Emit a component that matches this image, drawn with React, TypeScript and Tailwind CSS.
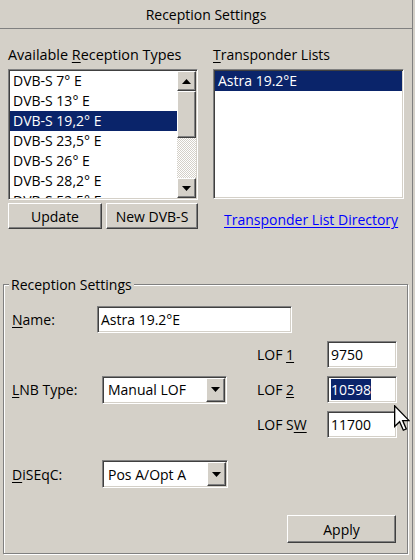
import React from "react";

const raised =
  "border border-t-white border-l-white border-r-[#404040] border-b-[#404040] shadow-[inset_-1px_-1px_0_#808080]";
const sunken =
  "border border-t-[#808080] border-l-[#808080] border-r-white border-b-white shadow-[inset_1px_1px_0_#404040,inset_-1px_-1px_0_#d4d0c8]";

function Tri({ down = false }: { down?: boolean }) {
  return (
    <svg width="9" height="5" viewBox="0 0 9 5">
      {down ? <polygon points="0,0 9,0 4.5,5" fill="#000" /> : <polygon points="0,5 9,5 4.5,0" fill="#000" />}
    </svg>
  );
}

function Select({ value, w }: { value: string; w: string }) {
  return (
    <div className={`${sunken} ${w} h-[28px] bg-white flex items-stretch p-[1px]`}>
      <div className="flex-1 flex items-center pl-[4px] whitespace-nowrap">{value}</div>
      <div className={`${raised} w-[19px] bg-[#d4d0c8] flex items-center justify-center`}>
        <Tri down />
      </div>
    </div>
  );
}

function Field({ children, w }: { children: React.ReactNode; w: string }) {
  return (
    <div className={`${sunken} ${w} h-[27px] bg-white flex items-center pl-[3px] whitespace-nowrap`}>
      {children}
    </div>
  );
}

export default function App() {
  const items = [
    "DVB-S 7° E",
    "DVB-S 13° E",
    "DVB-S 19,2° E",
    "DVB-S 23,5° E",
    "DVB-S 26° E",
    "DVB-S 28,2° E",
    "DVB-S 52,5° E",
  ];
  return (
    <div className="w-[415px] h-[560px] bg-[#d4d0c8] text-black font-['Open_Sans',Arial,sans-serif] text-[14px] relative overflow-hidden">
      <div className="w-[413px] h-full border-r border-[#808080] flex flex-col">
        <div className="h-[29px] border-b border-[#808080] flex items-center justify-center">
          Reception Settings
        </div>
        <div className="flex items-start pl-[8px] pt-[16px]">
          <div className="w-[190px] flex flex-col">
            <div className="h-[20px] leading-[20px] whitespace-nowrap text-[14.4px]">
              Available <u className="underline-offset-2">R</u>eception Types
            </div>
            <div className={`${sunken} mt-[4px] h-[131px] bg-white flex p-[1px]`}>
              <div className="flex-1 overflow-hidden">
                {items.map((t, i) => (
                  <div
                    key={t}
                    className={`h-[20px] leading-[20px] pl-[3px] whitespace-nowrap ${
                      i === 2 ? "bg-[#0a246a] text-white" : ""
                    }`}
                  >
                    {t}
                  </div>
                ))}
              </div>
              <div className="w-[19px] flex flex-col">
                <div className={`${raised} h-[20px] bg-[#d4d0c8] flex items-center justify-center`}>
                  <Tri />
                </div>
                <div className={`${raised} h-[47px] bg-[#d4d0c8]`} />
                <div className="flex-1 bg-[repeating-conic-gradient(#d4d0c8_0%_25%,#ffffff_0%_50%)] bg-[length:2px_2px]" />
                <div className={`${raised} h-[20px] bg-[#d4d0c8] flex items-center justify-center`}>
                  <Tri down />
                </div>
              </div>
            </div>
            <div className="mt-[3px] flex gap-[4px]">
              <div className={`${raised} w-[94px] h-[26px] flex items-center justify-center`}>Update</div>
              <div className={`${raised} w-[92px] h-[26px] flex items-center justify-center`}>New DVB-S</div>
            </div>
          </div>
          <div className="ml-[15px] w-[191px] flex flex-col">
            <div className="h-[20px] leading-[20px] whitespace-nowrap">
              <u className="underline-offset-2">T</u>ransponder Lists
            </div>
            <div className={`${sunken} mt-[4px] h-[130px] bg-white p-[1px]`}>
              <div className="h-[20px] leading-[20px] pl-[3px] bg-[#0a246a] text-white">Astra 19.2°E</div>
            </div>
            <div className="mt-[11px] ml-[11px] h-[20px] leading-[20px] text-[#0000ff] underline underline-offset-2 whitespace-nowrap">
              Transponder List Directory
            </div>
          </div>
        </div>

        <div className="mt-[54px] ml-[3px] w-[405px] h-[270px] relative border border-[#808080] shadow-[inset_1px_1px_0_#ffffff,1px_1px_0_#ffffff] flex flex-col">
          <div className="absolute left-[5px] top-[-10px] px-[2px] bg-[#d4d0c8] leading-[20px] whitespace-nowrap">
            Reception Settings
          </div>
          <div className="mt-[21px] pl-[8px] h-[27px] flex items-center">
            <div className="w-[85px]">
              <u className="underline-offset-2">N</u>ame:
            </div>
            <Field w="w-[195px]">Astra 19.2°E</Field>
          </div>
          <div className="mt-[8px] h-[27px] flex items-center">
            <div className="w-[253px]" />
            <div className="w-[70px]">
              LOF <u className="underline-offset-2">1</u>
            </div>
            <Field w="w-[70px]">9750</Field>
          </div>
          <div className="mt-[8px] h-[27px] flex items-center">
            <div className="pl-[8px] w-[98px]">
              <u className="underline-offset-2">L</u>NB Type:
            </div>
            <Select value="Manual LOF" w="w-[125px]" />
            <div className="w-[30px]" />
            <div className="w-[70px]">
              LOF <u className="underline-offset-2">2</u>
            </div>
            <Field w="w-[70px]">
              <span className="bg-[#0a246a] text-white">10598</span>
            </Field>
          </div>
          <div className="mt-[8px] h-[27px] flex items-center">
            <div className="w-[253px]" />
            <div className="w-[70px]">
              LOF S<u className="underline-offset-2">W</u>
            </div>
            <Field w="w-[70px]">11700</Field>
          </div>
          <div className="mt-[22px] h-[28px] flex items-center">
            <div className="pl-[8px] w-[98px]">
              <u className="underline-offset-2">D</u>iSEqC:
            </div>
            <Select value="Pos A/Opt A" w="w-[126px]" />
          </div>
          <div className="mt-[27px] flex justify-end pr-[11px]">
            <div className={`${raised} w-[109px] h-[28px] flex items-center justify-center`}>Apply</div>
          </div>
        </div>
      </div>
      <svg
        className="absolute left-[394px] top-[405px]"
        width="16"
        height="27"
        viewBox="0 0 12 20"
      >
        <path d="M0.5,0.5 L0.5,16 L4.2,12.4 L7,18.8 L9.2,17.8 L6.5,11.6 L11.3,11.6 Z" fill="#fff" stroke="#000" strokeWidth="1" />
      </svg>
    </div>
  );
}
